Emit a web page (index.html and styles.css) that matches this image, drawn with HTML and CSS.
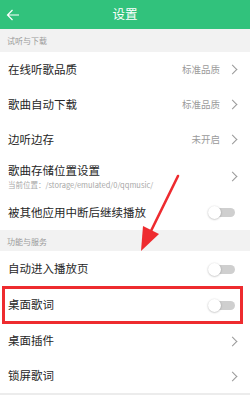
FILE: index.html
```html
<!DOCTYPE html>
<html lang="zh">
<head>
<meta charset="utf-8">
<link rel="stylesheet" href="styles.css">
</head>
<body>
<div class="page">
  <header class="topbar">
    <svg class="back" width="14" height="12" viewBox="0 0 14 12"><path d="M13 6H1.5M6.5 1L1.5 6l5 5" fill="none" stroke="#fff" stroke-width="1.2"/></svg>
    <div class="title">设置</div>
  </header>

  <div class="section">试听与下载</div>
  <div class="row h35"><span class="label">在线听歌品质</span><span class="value">标准品质</span><span class="chev"></span></div>
  <div class="row h35"><span class="label">歌曲自动下载</span><span class="value">标准品质</span><span class="chev"></span></div>
  <div class="row h35"><span class="label">边听边存</span><span class="value">未开启</span><span class="chev"></span></div>
  <div class="row h38">
    <div class="stack"><span class="label">歌曲存储位置设置</span><span class="sub">当前位置：/storage/emulated/0/qqmusic/</span></div>
    <span class="chev"></span>
  </div>
  <div class="row h35"><span class="label">被其他应用中断后继续播放</span><span class="toggle"></span></div>

  <div class="section s2">功能与服务</div>
  <div class="row"><span class="label">自动进入播放页</span><span class="toggle"></span></div>
  <div class="row boxed"><span class="label">桌面歌词</span><span class="toggle"></span></div>
  <div class="row"><span class="label">桌面插件</span><span class="chev"></span></div>
  <div class="row last"><span class="label">锁屏歌词</span><span class="chev"></span></div>

  <svg class="arrow" width="250" height="398" viewBox="0 0 250 398">
    <line x1="178" y1="176" x2="150" y2="233" stroke="#ee2b2f" stroke-width="2.6" stroke-linecap="round"/>
    <polygon points="141,251 143,226 159,234" fill="#ee2b2f"/>
  </svg>
</div>
</body>
</html>
```
FILE: styles.css
```css
* { box-sizing: border-box; }
html, body { margin: 0; padding: 0; }
body {
  width: 250px;
  height: 398px;
  overflow: hidden;
  background: #fff;
  font-family: "Noto Sans CJK SC", "Noto Sans", sans-serif;
}
.page { position: relative; width: 250px; height: 398px; }
.topbar {
  height: 29px;
  background: #31c27c;
  display: flex;
  align-items: center;
  justify-content: center;
  position: relative;
}
.back { position: absolute; left: 6px; top: 9px; }
.title { color: #fff; font-size: 12.5px; line-height: 1; }
.section {
  height: 23px;
  background: #f2f2f2;
  color: #9a9a9a;
  font-size: 8px;
  display: flex;
  align-items: center;
  padding-left: 7px;
}
.section.s2 { height: 21px; padding-top: 1px; }
.row {
  height: 36px;
  display: flex;
  align-items: center;
  padding: 0 13px 0 8px;
  position: relative;
}
.row.h35 { height: 35px; }
.row.h38 { height: 38px; }
.label { color: #262626; font-size: 11.5px; line-height: 1; flex: 1; }
.stack { flex: 1; display: flex; flex-direction: column; gap: 5px; padding-top: 1px; }
.stack .label { flex: none; }
.sub { color: #a8a8a8; font-size: 7.5px; line-height: 1; }
.value { color: #9a9a9a; font-size: 9.5px; line-height: 1; margin-right: 9px; }
.chev {
  width: 7px;
  height: 7px;
  border-top: 1px solid #999;
  border-right: 1px solid #999;
  transform: rotate(45deg);
  margin-right: 1px;
}
.toggle {
  position: relative;
  width: 24px;
  height: 9px;
  border-radius: 5px;
  background: #cfcfcf;
  margin-right: 2px;
}
.toggle::before {
  content: "";
  position: absolute;
  left: -3px;
  top: -2px;
  width: 13px;
  height: 13px;
  border-radius: 50%;
  background: #fff;
  box-shadow: 0 0.5px 2px rgba(0,0,0,0.3);
}
.row.last { border-bottom: 2px solid #ececec; }
.boxed::after {
  content: "";
  position: absolute;
  left: 2px;
  right: 7px;
  top: -1px;
  bottom: -1px;
  border: 3px solid #ee2b2f;
}
.arrow { position: absolute; left: 0; top: 0; pointer-events: none; }
```
